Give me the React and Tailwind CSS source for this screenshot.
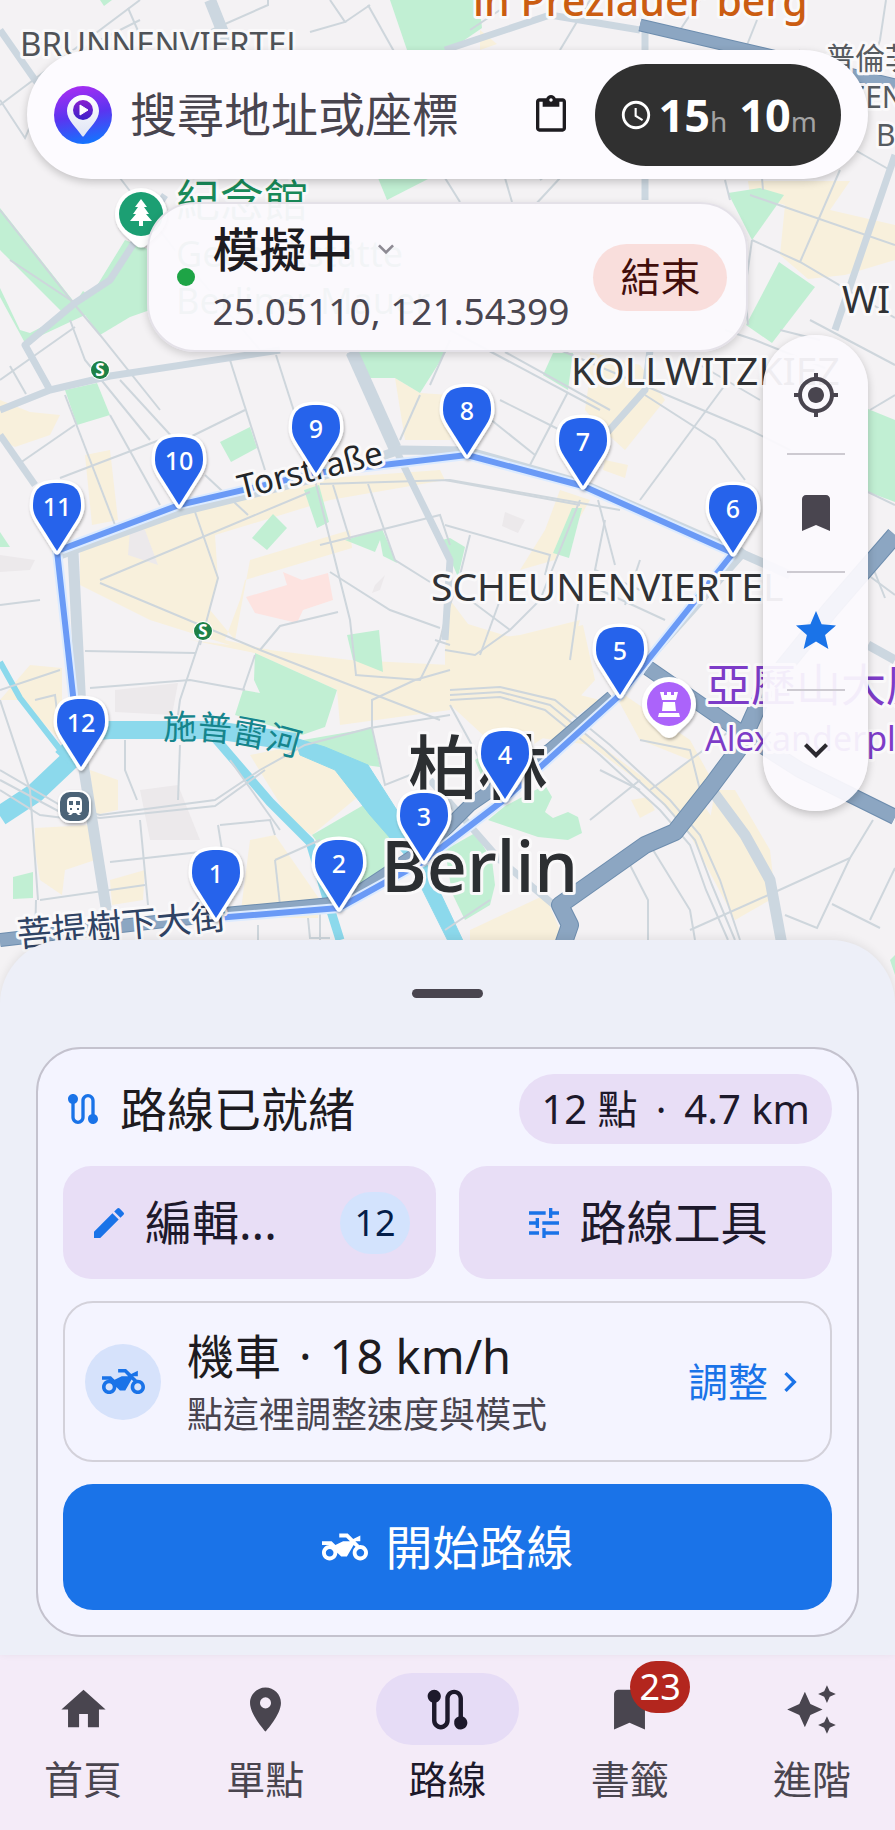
import {
  MdAccessTime,
  MdAutoAwesome,
  MdBookmark,
  MdContentPaste,
  MdEdit,
  MdHome,
  MdKeyboardArrowDown,
  MdKeyboardArrowRight,
  MdMyLocation,
  MdPlace,
  MdRoute,
  MdStar,
  MdTune,
  MdTwoWheeler,
} from "react-icons/md";

const STOPS = [
  [216, 918],
  [339, 908],
  [424, 861],
  [505, 799],
  [620, 695],
  [733, 553],
  [583, 486],
  [467, 455],
  [316, 473],
  [179, 505],
  [57, 551],
  [81, 767],
];

const BLOCKS = [
  "80,548 190,512 330,478 440,470 445,480 330,500 215,535 218,580 210,610 235,640 250,560 350,530 352,548 245,580 240,600 225,640 270,650 255,653 150,620 80,585",
  "0,400 30,412 60,415 50,435 15,447 0,440",
  "85,455 110,450 118,520 92,525",
  "395,378 420,393 450,395 450,440 405,440",
  "590,352 640,365 665,400 625,450 605,432 585,410 590,375",
  "605,460 628,465 625,478 603,470",
  "560,490 590,500 555,560 520,570 545,530",
  "830,210 895,225 895,260 845,275 808,279 780,255 785,205 750,195 748,181 850,181",
  "0,700 30,665 62,668 62,742 20,700",
  "90,770 118,780 118,810 95,815",
  "35,828 90,825 95,860 65,870 62,895 40,880 35,850",
  "110,880 145,870 143,900 112,905",
  "250,840 275,835 320,900 318,918 240,918",
  "250,755 300,745 340,768 360,795 312,835 290,820",
  "255,653 190,640 350,660 450,665 450,710 340,725 337,690",
  "450,600 480,640 520,635 580,620 560,690 600,700 510,760 445,700 445,650",
  "455,620 520,640 583,625 595,680 545,735 475,690 450,700",
  "510,690 545,700 600,745 660,790 700,800 770,900 735,920 690,835 650,790 590,745 520,735",
  "610,685 690,740 712,780 680,815 650,790 690,760 640,740",
  "631,800 648,797 655,810 640,818",
  "715,790 735,790 770,850 775,895 735,920 705,850",
  "470,930 545,895 560,930 560,945 470,945",
  "480,30 497,44 480,50",
];

const PARKS = [
  "390,0 479,0 482,28 450,50 407,50",
  "0,208 75,303 83,291 90,297 125,240 150,250 150,310 130,317 100,335 85,315 25,343 0,297 0,288 20,330 30,333 65,315 0,250",
  "350,352 446,352 420,393 395,378 365,378",
  "378,178 430,178 387,200",
  "728,193 760,188 784,195 752,240",
  "779,262 815,287 772,343 746,325",
  "868,409 895,420 895,502 868,492",
  "553,353 573,353 568,390 543,375",
  "65,390 97,383 110,415 77,425",
  "220,442 250,427 257,448 231,462",
  "252,538 273,514 287,528 267,550",
  "304,490 319,485 329,522 317,528",
  "345,540 382,529 397,563 383,556 380,540 375,552",
  "442,540 450,538 465,547 458,577",
  "347,635 379,630 383,672 353,660",
  "572,508 582,508 569,558 553,553",
  "255,653 337,690 325,727 302,735 235,715 243,690 260,693 254,680",
  "303,740 372,728 380,767 365,765",
  "312,835 367,803 397,835 383,872 360,893 345,880",
  "13,877 33,872 33,898 13,899",
  "475,760 490,750 500,780 485,785",
  "545,785 552,797 545,812 553,818 568,812 578,817 582,833 568,840 538,837 488,820 505,806",
  "445,850 475,833 492,860 495,885 490,905 465,920 452,893",
  "0,532 10,547 0,547",
  "890,960 895,955 895,975",
  "100,0 112,0 104,6",
];

const LANES = [
  "0,105 140,0",
  "128,8 142,40",
  "0,100 25,138 60,60 140,20",
  "268,0 268,5 200,35",
  "330,0 345,22 310,32",
  "370,5 345,22",
  "368,5 410,80",
  "120,178 175,250 260,350",
  "0,210 74,304",
  "10,260 75,303",
  "74,304 100,335 160,410",
  "70,320 85,360 150,440",
  "0,380 75,327",
  "10,366 26,394",
  "65,395 115,525",
  "20,463 75,425",
  "60,478 170,436",
  "110,415 160,505",
  "120,380 175,440",
  "230,360 265,470",
  "276,355 300,430",
  "180,442 245,410",
  "205,475 248,515",
  "100,580 310,492",
  "195,512 218,578 200,645",
  "100,583 260,650 440,720",
  "315,480 350,620 356,675",
  "333,485 350,540",
  "368,484 395,560 430,582",
  "320,545 440,515 450,545",
  "330,572 390,610 440,628",
  "260,650 280,626 338,612",
  "320,484 450,480 620,510",
  "430,385 450,340",
  "420,395 400,440",
  "450,330 600,410",
  "505,352 610,410",
  "500,400 560,430",
  "485,415 535,455",
  "568,392 530,465",
  "560,350 750,430 790,450",
  "725,385 640,500",
  "645,395 715,440 745,480",
  "700,365 760,400",
  "445,480 580,505",
  "445,525 550,555 545,575",
  "580,500 540,600 510,630 475,655 445,650",
  "598,500 615,565",
  "605,520 595,570 640,590",
  "470,535 460,575 445,620",
  "445,585 470,600 510,630",
  "580,590 570,660",
  "600,590 665,620",
  "640,560 625,605",
  "480,655 500,600",
  "0,605 40,600",
  "0,690 60,670",
  "85,651 195,653",
  "90,688 190,680 245,690",
  "200,640 180,700 178,715",
  "125,740 125,770 137,800",
  "180,745 178,800",
  "255,655 243,690",
  "35,700 55,695 60,735",
  "0,700 30,790 38,900",
  "0,770 60,805 100,815 215,800 260,770 305,745 370,728 450,715",
  "0,780 60,812 100,818 215,806 265,770",
  "0,790 40,815 80,820",
  "40,900 145,885",
  "110,862 200,852",
  "140,820 148,905",
  "36,900 35,940",
  "220,825 270,820 275,835",
  "230,760 280,830",
  "218,825 222,850",
  "275,860 320,840",
  "275,860 280,905",
  "372,728 372,700 415,680 450,670",
  "372,728 385,785 410,775",
  "355,675 420,680 440,640 445,620",
  "435,640 450,645",
  "450,690 500,687 555,700 610,745 670,800 700,835 720,880 740,940",
  "450,695 500,692 550,705 605,750 665,805 695,840 712,885 735,940",
  "450,700 500,697 545,710 600,755 660,810 690,845 706,890 728,940",
  "450,705 480,760",
  "650,790 690,760 745,720",
  "640,740 690,750 700,790",
  "600,770 640,790",
  "650,845 690,910 695,940",
  "630,865 648,900 648,940",
  "590,820 640,780",
  "775,892 850,858 873,820",
  "690,930 775,892",
  "785,915 817,928 850,858",
  "895,868 870,920",
  "832,904 880,928",
  "445,930 490,900",
  "752,240 800,262 895,318",
  "752,240 745,290 748,325",
  "730,200 725,180",
  "750,195 895,245",
  "840,170 800,262",
  "855,150 890,170",
  "763,190 762,178",
  "725,330 755,340 830,370",
  "810,320 895,365",
  "895,395 870,410",
  "868,492 895,505",
  "868,575 895,595",
  "870,560 885,598",
  "800,50 770,100",
  "886,0 880,40 870,70",
  "700,0 680,30",
  "590,0 560,50",
  "757,20 745,50",
  "540,180 580,150",
  "445,178 460,202",
  "505,178 512,202",
  "560,178 535,205",
  "500,10 470,30",
  "820,340 780,330",
  "320,905 320,940",
  "258,925 258,940",
  "308,918 310,938 330,938",
];

const AVENUES = [
  "0,30 35,80 120,175",
  "165,195 110,280 75,303 25,345 50,390",
  "0,410 50,390 110,376 280,350",
  "0,435 35,485",
  "350,352 395,448 450,560 445,640",
  "445,50 550,15 640,30",
  "645,30 645,200",
  "650,350 645,390 605,435",
  "895,155 835,330",
  "430,780 500,860 560,910",
];

function MapLabel({ x, y, size, fill, children, rotate, weight = 500 }) {
  return (
    <text
      x={x}
      y={y}
      fontSize={size}
      fontWeight={weight}
      fill={fill}
      stroke="#faf9fa"
      strokeWidth="6"
      strokeLinejoin="round"
      paintOrder="stroke"
      transform={rotate ? `rotate(${rotate} ${x} ${y})` : undefined}
    >
      {children}
    </text>
  );
}

function SBahn({ x, y }) {
  return (
    <g>
      <circle cx={x} cy={y} r="10" fill="#fff" />
      <circle cx={x} cy={y} r="9" fill="#1d8147" />
      <text x={x} y={y + 6} fontSize="17" fontWeight="700" fill="#fff" textAnchor="middle">
        S
      </text>
    </g>
  );
}

function StopPin({ x, y, label }) {
  return (
    <g transform={`translate(${x} ${y})`}>
      <path
        d="M0 0 L-19 -30 C-22 -35 -24 -39 -24 -45 C-24 -62 -17 -68 0 -68 C17 -68 24 -62 24 -45 C24 -39 22 -35 19 -30 Z"
        fill="#2563eb"
        stroke="#fff"
        strokeWidth="7"
        strokeLinejoin="round"
        paintOrder="stroke"
        filter="url(#pinShadow)"
      />
      <text y="-35" fontSize="25" fontWeight="500" fill="#fff" textAnchor="middle">
        {label}
      </text>
    </g>
  );
}

function MapCanvas() {
  return (
    <svg
      className="absolute inset-0 h-full w-full"
      viewBox="0 0 895 1010"
      preserveAspectRatio="xMidYMin slice"
      role="img"
      aria-label="柏林地圖"
    >
      <defs>
        <filter id="pinShadow" x="-30%" y="-20%" width="160%" height="150%">
          <feDropShadow dx="1" dy="2" stdDeviation="1.5" floodColor="#000" floodOpacity="0.3" />
        </filter>
        <path id="spree" d="M163 740 Q235 735 310 762" />
      </defs>
      <rect width="895" height="1010" fill="#f4f2f4" />
      <g fill="#f8f0dc">
        {BLOCKS.map((p) => (
          <polygon key={p} points={p} />
        ))}
      </g>
      <g fill="#ece9eb">
        <polygon points="130,530 145,530 158,565 128,555" />
        <polygon points="115,690 178,683 172,715 115,712" />
        <polygon points="140,790 178,785 200,840 150,840" />
        <polygon points="60,515 80,530 60,535" />
        <polygon points="0,555 35,560 30,570 0,572" />
        <polygon points="505,512 525,520 518,533 502,526" />
        <polygon points="375,585 385,575 380,590 372,593" />
      </g>
      <g fill="#c1efd3">
        {PARKS.map((p) => (
          <polygon key={p} points={p} />
        ))}
      </g>
      <polygon
        points="246,597 287,585 283,572 302,580 328,573 333,600 303,610 297,623 255,613"
        fill="#fde3e0"
      />

      <g fill="none" stroke="#8cd9ec" strokeLinejoin="round">
        <polyline points="0,662 20,698 62,752" strokeWidth="6" />
        <polyline points="0,816 35,793 72,758" strokeWidth="20" />
        <polyline points="62,758 85,732 110,730 215,730 295,742" strokeWidth="18" />
        <polyline points="215,738 270,802 310,842 325,892 340,940" strokeWidth="9" />
        <polygon
          points="295,738 325,747 368,765 398,812 420,850 465,945 450,945 405,855 370,815 335,770 300,755"
          fill="#8cd9ec"
          strokeWidth="1"
        />
      </g>

      <g fill="none" stroke="#ced6dc" strokeWidth="2">
        {LANES.map((p) => (
          <polyline key={p} points={p} />
        ))}
      </g>
      <g fill="none" stroke="#ccd7e0" strokeWidth="7" strokeLinejoin="round">
        {AVENUES.map((p) => (
          <polyline key={p} points={p} />
        ))}
        <polyline points="210,0 228,45" strokeWidth="12" />
        <polyline points="352,352 395,448" strokeWidth="13" />
        <polyline points="73,552 84,770 108,920" strokeWidth="11" />
        <polyline points="57,556 179,512 316,478 400,450 467,451 583,484 745,555 790,575" strokeWidth="9" />
        <polyline points="745,550 690,612 620,690" strokeWidth="9" />
        <polyline points="708,785 745,835 770,880 782,945" strokeWidth="11" />
        <polyline points="868,645 895,660" strokeWidth="9" />
      </g>
      <g fill="none" strokeLinejoin="round">
        <g stroke="#6d8dae">
          <polyline points="640,25 790,60 895,85" strokeWidth="13" />
          <polyline points="895,535 830,610 765,690 738,750 712,785 675,832 645,845 560,905 570,925 563,945" strokeWidth="18" />
          <polyline points="648,668 745,735 800,770 895,817" strokeWidth="16" />
          <polyline points="612,697 550,750 470,805 430,845 342,903 225,914 0,940" strokeWidth="14" />
        </g>
        <g stroke="#8ca6c2">
          <polyline points="640,25 790,60 895,85" strokeWidth="11" />
          <polyline points="895,535 830,610 765,690 738,750 712,785 675,832 645,845 560,905 570,925 563,945" strokeWidth="16" />
          <polyline points="648,668 745,735 800,770 895,817" strokeWidth="14" />
          <polyline points="612,697 550,750 470,805 430,845 342,903 225,914 0,940" strokeWidth="12" />
        </g>
      </g>

      <g fill="none" strokeLinejoin="round">
        <polyline points={STOPS.join(" ")} stroke="#dcebff" strokeWidth="10" />
        <polyline points={STOPS.join(" ")} stroke="#6a9af6" strokeWidth="6" />
      </g>

      <SBahn x={100} y={370} />
      <SBahn x={203} y={631} />

      <MapLabel x={473} y={16} size={41} fill="#cb5d12">in Prezlauer berg</MapLabel>
      <MapLabel x={20} y={56} size={33} fill="#4f5358" weight={400}>BRUNNENVIERTEL</MapLabel>
      <MapLabel x={825} y={69} size={30} fill="#565b60" weight={400}>普倫茨</MapLabel>
      <MapLabel x={848} y={108} size={30} fill="#565b60" weight={400}>ZEN</MapLabel>
      <MapLabel x={876} y={146} size={30} fill="#565b60" weight={400}>B</MapLabel>
      <MapLabel x={842} y={313} size={38} fill="#303235" weight={400}>WI</MapLabel>
      <MapLabel x={571} y={385} size={39} fill="#303235" weight={400}>KOLLWITZKIEZ</MapLabel>
      <MapLabel x={431} y={601} size={39} fill="#303235" weight={400}>SCHEUNENVIERTEL</MapLabel>
      <MapLabel x={176} y={217} size={44} fill="#188a59" weight={400}>紀念館</MapLabel>
      <MapLabel x={176} y={267} size={36} fill="#188a59" weight={400}>Gedenkstätte</MapLabel>
      <MapLabel x={176} y={314} size={36} fill="#188a59" weight={400}>Berliner Mauer</MapLabel>
      <MapLabel x={241} y={499} size={33} fill="#232629" rotate={-14} weight={400}>Torstraße</MapLabel>
      <text fontSize="34" fontWeight="400" fill="#15858c">
        <textPath href="#spree">施普雷河</textPath>
      </text>
      <MapLabel x={18} y={947} size={35} fill="#2f4364" rotate={-5} weight={400}>菩提樹下大街</MapLabel>
      <MapLabel x={706} y={702} size={45} fill="#7d3cc8" weight={400}>亞歷山大廣場</MapLabel>
      <MapLabel x={705} y={751} size={34} fill="#7d3cc8" weight={400}>Alexanderplatz</MapLabel>
      <MapLabel x={408} y={794} size={70} fill="#2c2f32">柏林</MapLabel>
      <MapLabel x={381} y={892} size={70} fill="#2c2f32">Berlin</MapLabel>

      <g filter="url(#pinShadow)">
        <path d="M141 188 a26 26 0 0 1 26 26 c0 16-12 22-19 30 q-7 7-14 0 c-7-8-19-14-19-30 a26 26 0 0 1 26-26z" fill="#fff" />
        <circle cx="141" cy="214" r="22" fill="#1a9f73" />
        <path d="M141 199 l6 8 h-3 l5 7 h-3 l6 7 h-9 v5 h-4 v-5 h-9 l6-7 h-3 l5-7 h-3z" fill="#fff" />
      </g>
      <g filter="url(#pinShadow)">
        <path d="M669 677 a27 27 0 0 1 27 27 c0 16-13 22-20 31 q-7 6-14 0 c-7-9-20-15-20-31 a27 27 0 0 1 27-27z" fill="#fff" />
        <circle cx="669" cy="704" r="22" fill="#ab63fa" />
        <path d="M660 692 h4 v3 h3 v-3 h4 v3 h3 v-3 h4 l-2 8 h-14z M663 702 h12 l1 9 h-14z M659 713 h20 l1 4 h-22z" fill="#fff" />
      </g>
      <g filter="url(#pinShadow)">
        <rect x="59" y="791" width="31" height="31" rx="11" fill="#4c6377" stroke="#fff" strokeWidth="2" />
        <path
          fillRule="evenodd"
          d="M67 802 q0-5 5-5 h5 q5 0 5 5 v8 q0 3-3 3 l2 2 h-3 l-2-2 h-3 l-2 2 h-3 l2-2 q-3 0-3-3z M69 801 v4 h4 v-4z M76 801 v4 h4 v-4z M70 808 v2 h2 v-2z M77 808 v2 h2 v-2z"
          fill="#fff"
        />
      </g>

      {STOPS.map(([x, y], i) => (
        <StopPin key={i} x={x} y={y} label={i + 1} />
      ))}
    </svg>
  );
}

function AppLogo() {
  return (
    <svg className="size-[58px] shrink-0" viewBox="0 0 58 58" aria-hidden="true">
      <defs>
        <linearGradient id="logoBg" x1="0.4" y1="0" x2="0.6" y2="1">
          <stop offset="0" stopColor="#a52df2" />
          <stop offset="0.5" stopColor="#5a35f0" />
          <stop offset="1" stopColor="#1276ff" />
        </linearGradient>
        <linearGradient id="logoPin" x1="0" y1="0" x2="0" y2="1">
          <stop offset="0" stopColor="#fff" />
          <stop offset="1" stopColor="#dfe4f5" />
        </linearGradient>
        <linearGradient id="logoDot" x1="0" y1="0" x2="0" y2="1">
          <stop offset="0" stopColor="#8a1fd0" />
          <stop offset="1" stopColor="#3a22c8" />
        </linearGradient>
      </defs>
      <circle cx="29" cy="29" r="29" fill="url(#logoBg)" />
      <path d="M29 9 C38 9 45 16 45 25 C45 34 36 41 30 50 Q29 51 28 50 C22 41 13 34 13 25 C13 16 20 9 29 9z" fill="url(#logoPin)" />
      <circle cx="29" cy="24" r="10" fill="url(#logoDot)" />
      <path d="M26 19 L34 24 L26 29z" fill="#fff" stroke="#fff" strokeLinejoin="round" />
    </svg>
  );
}

function SearchBar() {
  return (
    <form
      className="flex h-[129px] items-center rounded-full bg-[#fdfbff] pr-[27px] pl-[27px] shadow-[0_3px_8px_rgba(0,0,0,0.2)]"
      onSubmit={(e) => e.preventDefault()}
    >
      <AppLogo />
      <input
        type="text"
        aria-label="搜尋地址或座標"
        placeholder="搜尋地址或座標"
        className="ml-[18px] h-16 min-w-0 flex-1 bg-transparent text-[47px] text-[#49454f] outline-none placeholder:text-[#49454f]"
      />
      <button type="button" aria-label="貼上" className="mr-5 p-1 text-[#1d1b20]">
        <MdContentPaste className="size-10" />
      </button>
      <button
        type="button"
        className="flex h-[102px] items-center rounded-full bg-[#303030] px-6 text-white"
      >
        <MdAccessTime className="mr-1.5 size-[34px]" />
        <span className="flex items-baseline whitespace-nowrap">
          <span className="text-[45px] font-bold">15</span>
          <span className="mr-3 text-[28px] text-[#a3a3a3]">h</span>
          <span className="text-[45px] font-bold">10</span>
          <span className="text-[28px] text-[#a3a3a3]">m</span>
        </span>
      </button>
    </form>
  );
}

function StatusCard() {
  return (
    <section className="flex h-[150px] items-center rounded-[48px] border-2 border-[#e4e1e8] bg-[#fbf9fd]/96 pr-[19px] pl-7 shadow-[0_3px_8px_rgba(0,0,0,0.16)]">
      <span className="size-[18px] rounded-full bg-[#1ea446]" />
      <div className="ml-[18px] flex flex-col pt-1">
        <button type="button" className="flex items-center gap-4 text-left text-[#1d1b20]">
          <span className="text-[47px] leading-[64px] font-medium">模擬中</span>
          <MdKeyboardArrowDown className="size-8 text-[#8d8a93]" />
        </button>
        <span className="text-[37px] leading-[60px] text-[#49454f]">25.05110, 121.54399</span>
      </div>
      <button
        type="button"
        className="ml-6 h-[67px] rounded-full bg-[#f9dedc] px-[27px] text-[40px] leading-none text-[#410e0b]"
      >
        結束
      </button>
    </section>
  );
}

const TOOLS = [
  { label: "定位", Icon: MdMyLocation, color: "text-[#49454f]" },
  { label: "書籤", Icon: MdBookmark, color: "text-[#49454f]" },
  { label: "收藏", Icon: MdStar, color: "text-[#1a73e8]" },
  { label: "展開", Icon: MdKeyboardArrowDown, color: "text-[#2b292f]" },
];

function ToolRail() {
  return (
    <div className="flex w-[105px] flex-col items-center divide-y-2 divide-[#cdcad1] rounded-[52px] bg-[#fbf9fd]/94 py-0.5 shadow-[0_3px_8px_rgba(0,0,0,0.22)]">
      {TOOLS.map(({ label, Icon, color }) => (
        <button
          key={label}
          type="button"
          aria-label={label}
          className={`flex h-[118px] w-[58px] items-center justify-center ${color}`}
        >
          <Icon className="size-12" />
        </button>
      ))}
    </div>
  );
}

function RouteCard() {
  return (
    <section className="mx-9 flex flex-col gap-[22px] rounded-[45px] border-2 border-[#c4c2ce] bg-[#f4f4ff] p-[25px]">
      <div className="flex h-[70px] items-center">
        <MdRoute className="size-10 text-[#1a73e8]" />
        <h2 className="ml-[17px] text-[47px] leading-none text-[#1d1b20]">路線已就緒</h2>
        <span className="ml-auto flex h-[70px] items-center gap-[18px] rounded-full bg-[#e8def6] px-[22px] text-[40px] leading-none whitespace-nowrap text-[#1d192b]">
          <span>12 點</span>
          <span>·</span>
          <span>4.7 km</span>
        </span>
      </div>

      <div className="grid grid-cols-2 gap-[23px] text-[47px] leading-none text-[#1d192b]">
        <button type="button" className="flex h-[113px] items-center rounded-[28px] bg-[#e8def6] pr-[26px] pl-[26px]">
          <MdEdit className="size-10 shrink-0 text-[#1a73e8]" />
          <span className="ml-4">編輯...</span>
          <span className="ml-auto flex h-[62px] w-[70px] items-center justify-center rounded-full bg-[#d3e3fd] text-[36px] text-[#041e49]">
            12
          </span>
        </button>
        <button type="button" className="flex h-[113px] items-center justify-center gap-4 rounded-[28px] bg-[#e8def6]">
          <MdTune className="size-10 text-[#1a73e8]" />
          <span>路線工具</span>
        </button>
      </div>

      <button
        type="button"
        className="flex h-[161px] items-center rounded-[30px] border-2 border-[#d3d1da] pr-5 pl-5 text-left"
      >
        <span className="flex size-[76px] items-center justify-center rounded-full bg-[#d6e2fb]">
          <MdTwoWheeler className="size-[43px] text-[#1a73e8]" />
        </span>
        <span className="ml-[26px] flex flex-col">
          <span className="flex gap-[18px] text-[47px] leading-[66px] text-[#1d1b20]">
            <span>機車</span>
            <span>·</span>
            <span>18 km/h</span>
          </span>
          <span className="text-[36px] leading-[52px] text-[#49454f]">點這裡調整速度與模式</span>
        </span>
        <span className="ml-auto flex items-center gap-0.5 text-[40px] leading-none text-[#1a73e8]">
          調整
          <MdKeyboardArrowRight className="size-10" />
        </span>
      </button>

      <button
        type="button"
        className="flex h-[126px] items-center justify-center gap-[18px] rounded-[30px] bg-[#1a73e8] text-[47px] leading-none text-white"
      >
        <MdTwoWheeler className="size-[46px]" />
        開始路線
      </button>
    </section>
  );
}

const TABS = [
  { label: "首頁", Icon: MdHome },
  { label: "單點", Icon: MdPlace },
  { label: "路線", Icon: MdRoute, active: true },
  { label: "書籤", Icon: MdBookmark, badge: 23 },
  { label: "進階", Icon: MdAutoAwesome },
];

function BottomNav() {
  return (
    <nav className="grid grow grid-cols-5 gap-4 bg-[#f4ebf8] pt-[18px] pb-5">
      {TABS.map(({ label, Icon, active, badge }) => (
        <a
          key={label}
          href="#"
          aria-current={active ? "page" : undefined}
          className={`flex flex-col items-center gap-2 ${active ? "text-[#1d192b]" : "text-[#49454f]"}`}
        >
          <span
            className={`relative flex h-[72px] w-[143px] items-center justify-center rounded-full ${active ? "bg-[#e6dcf6]" : ""}`}
          >
            <Icon className="size-[53px]" />
            {badge && (
              <span className="absolute -top-3 left-[72px] flex h-[52px] w-[60px] items-center justify-center rounded-full bg-[#b3261e] text-[36px] leading-none text-white">
                {badge}
              </span>
            )}
          </span>
          <span className="text-[39px] leading-[52px]">{label}</span>
        </a>
      ))}
    </nav>
  );
}

export default function App() {
  return (
    <div className="flex min-h-screen flex-col bg-[#edeff8] font-['Noto_Sans','Noto_Sans_CJK_TC',sans-serif]">
      <header className="relative flex flex-col px-[27px] pt-[50px] pb-[129px]">
        <div className="absolute inset-x-0 top-0 -bottom-[69px] overflow-hidden">
          <MapCanvas />
        </div>
        <div className="relative flex flex-col">
          <SearchBar />
          <div className="mt-[23px] self-center">
            <StatusCard />
          </div>
          <div className="-mt-[17px] self-end">
            <ToolRail />
          </div>
        </div>
      </header>

      <main className="relative rounded-t-[64px] bg-[#edeff8] pb-[18px] shadow-[0_-2px_10px_rgba(0,0,0,0.08)]">
        <div className="flex h-[107px] items-center justify-center">
          <span className="h-[9px] w-[71px] rounded-full bg-[#49454f]" />
        </div>
        <RouteCard />
      </main>
      <BottomNav />
    </div>
  );
}
